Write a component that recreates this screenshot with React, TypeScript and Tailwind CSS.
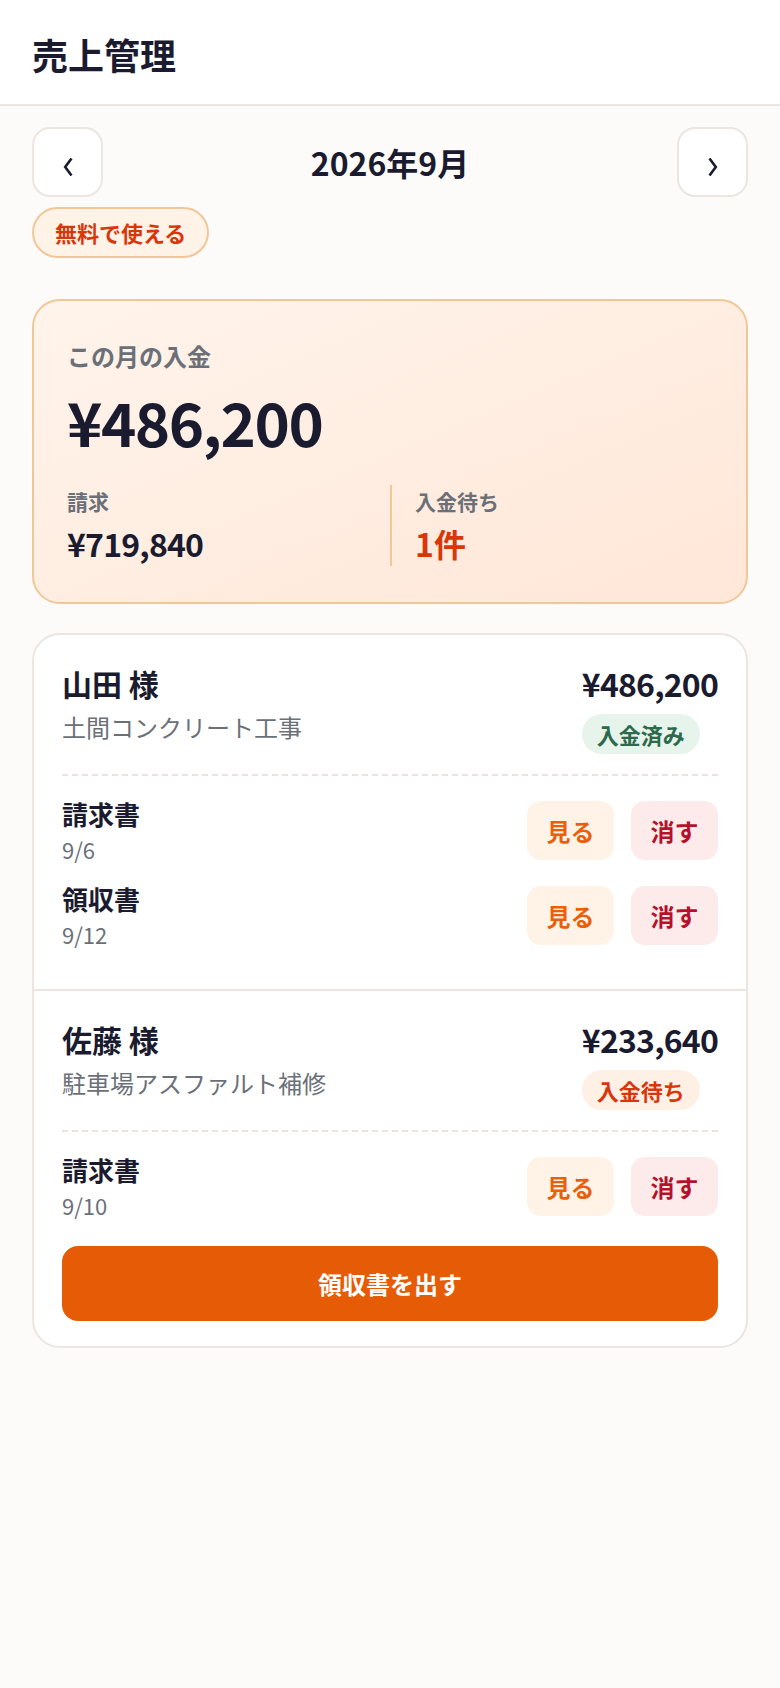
const docBtn =
  "flex h-[59px] w-[87px] items-center justify-center rounded-[14px] text-[24px] font-bold";

type Doc = { title: string; date: string };

type Entry = {
  name: string;
  job: string;
  amount: string;
  status: "paid" | "waiting";
  docs: Doc[];
  canIssueReceipt?: boolean;
};

const entries: Entry[] = [
  {
    name: "山田 様",
    job: "土間コンクリート工事",
    amount: "¥486,200",
    status: "paid",
    docs: [
      { title: "請求書", date: "9/6" },
      { title: "領収書", date: "9/12" },
    ],
  },
  {
    name: "佐藤 様",
    job: "駐車場アスファルト補修",
    amount: "¥233,640",
    status: "waiting",
    docs: [{ title: "請求書", date: "9/10" }],
    canIssueReceipt: true,
  },
];

function Chevron({ dir }: { dir: "left" | "right" }) {
  return (
    <svg
      viewBox="0 0 10 18"
      className="mt-[10px] h-[18px] w-[10px]"
      fill="none"
      stroke="currentColor"
      strokeWidth={2.6}
      strokeLinejoin="miter"
      aria-hidden
    >
      {dir === "left" ? <path d="M8.5 0.5 L2.2 9 L8.5 17.5" /> : <path d="M1.5 0.5 L7.8 9 L1.5 17.5" />}
    </svg>
  );
}

function EntryBlock({ entry, last }: { entry: Entry; last: boolean }) {
  return (
    <div
      className={[
        "px-[28px] pt-[28px] pb-[22px]",
        last ? "" : "border-b-2 border-[#ebe6e1]",
      ].join(" ")}
    >
      <div className="flex items-start justify-between">
        <div>
          <div className="text-[30px] font-bold leading-[40px]">{entry.name}</div>
          <div className="mt-[7px] text-[24px] leading-[34px] text-[#6b7078]">
            {entry.job}
          </div>
        </div>
        <div className="flex flex-col items-start">
          <div className="text-[32px] font-bold leading-[40px] tracking-tight">{entry.amount}</div>
          {entry.status === "paid" ? (
            <span className="mt-[11px] flex h-[40px] items-center rounded-full bg-[#e6f4ec] px-[15px] text-[22px] font-bold text-[#2c6a4b]">
              入金済み
            </span>
          ) : (
            <span className="mt-[11px] flex h-[40px] items-center rounded-full bg-[#fff0e6] px-[15px] text-[22px] font-bold text-[#d8360b]">
              入金待ち
            </span>
          )}
        </div>
      </div>

      <div className="mt-[20px] border-t-2 border-dashed border-[#e8e4e0] pt-[21px]">
        {entry.docs.map((d) => (
          <div key={d.title} className="mb-[18px] flex items-center justify-between">
            <div>
              <div className="text-[26px] font-bold leading-[34px]">{d.title}</div>
              <div className="mt-[3px] text-[22px] leading-[30px] text-[#6b7078]">
                {d.date}
              </div>
            </div>
            <div className="flex gap-[17px]">
              <button type="button" className={docBtn + " bg-[#fff3e7] text-[#e8600c]"}>
                見る
              </button>
              <button type="button" className={docBtn + " bg-[#fdeaea] text-[#b5112c]"}>
                消す
              </button>
            </div>
          </div>
        ))}
        {entry.canIssueReceipt && (
          <button
            type="button"
            className="mt-[26px] mb-[3px] flex h-[75px] w-full items-center justify-center rounded-[16px] bg-[#e65c06] text-[24px] font-bold text-white"
          >
            領収書を出す
          </button>
        )}
      </div>
    </div>
  );
}

export default function App() {
  return (
    <div className="min-h-[1688px] bg-[#fdfbf9] font-['Noto_Sans_CJK_JP','Noto_Sans',sans-serif] text-[#1b1b2f]">
      <header className="flex h-[106px] items-center border-b-2 border-[#ebe6e1] bg-white px-8 pt-[3px]">
        <h1 className="text-[36px] font-bold leading-none">売上管理</h1>
      </header>

      <main className="px-8 pt-[21px]">
        {/* month switcher */}
        <div className="flex items-center justify-between">
          <button
            type="button"
            aria-label="前の月"
            className="flex h-[70px] w-[71px] items-start justify-center rounded-[18px] border-2 border-[#ebe6e1] bg-white pt-[19px]"
          >
            <Chevron dir="left" />
          </button>
          <div className="text-[32px] font-bold leading-[44px]">2026年9月</div>
          <button
            type="button"
            aria-label="次の月"
            className="flex h-[70px] w-[71px] items-start justify-center rounded-[18px] border-2 border-[#ebe6e1] bg-white pt-[19px]"
          >
            <Chevron dir="right" />
          </button>
        </div>

        <div className="mt-[10px] flex">
          <span className="flex h-[51px] items-center rounded-full border-2 border-[#f1c79a] bg-[#fff2e6] px-[21px] text-[22px] font-bold text-[#d8360b]">
            無料で使える
          </span>
        </div>

        {/* monthly summary */}
        <section className="mt-[41px] rounded-[28px] border-2 border-[#f0c898] bg-linear-to-br from-[#fff4eb] to-[#ffe7d8] px-[33px] pt-[38px] pb-[36px]">
          <div className="text-[24px] font-bold leading-[34px] text-[#6b7078]">この月の入金</div>
          <div className="mt-[12px] text-[60px] font-bold leading-[72px] tracking-tight">¥486,200</div>
          <div className="mt-[28px] grid grid-cols-2">
            <div className="pt-[1px] pb-[3px]">
              <div className="text-[21px] font-bold leading-[30px] text-[#6b7078]">請求</div>
              <div className="mt-[7px] text-[32px] font-bold leading-[40px] tracking-tight">¥719,840</div>
            </div>
            <div className="border-l-2 border-[#f0c898] pt-[1px] pb-[3px] pl-[23px]">
              <div className="text-[21px] font-bold leading-[30px] text-[#6b7078]">入金待ち</div>
              <div className="mt-[7px] text-[32px] font-bold leading-[40px] text-[#d8360b]">1件</div>
            </div>
          </div>
        </section>

        {/* customer list */}
        <section className="mt-[29px] overflow-hidden rounded-[28px] border-2 border-[#ebe6e1] bg-white">
          {entries.map((e, i) => (
            <EntryBlock key={e.name} entry={e} last={i === entries.length - 1} />
          ))}
        </section>
      </main>
    </div>
  );
}
